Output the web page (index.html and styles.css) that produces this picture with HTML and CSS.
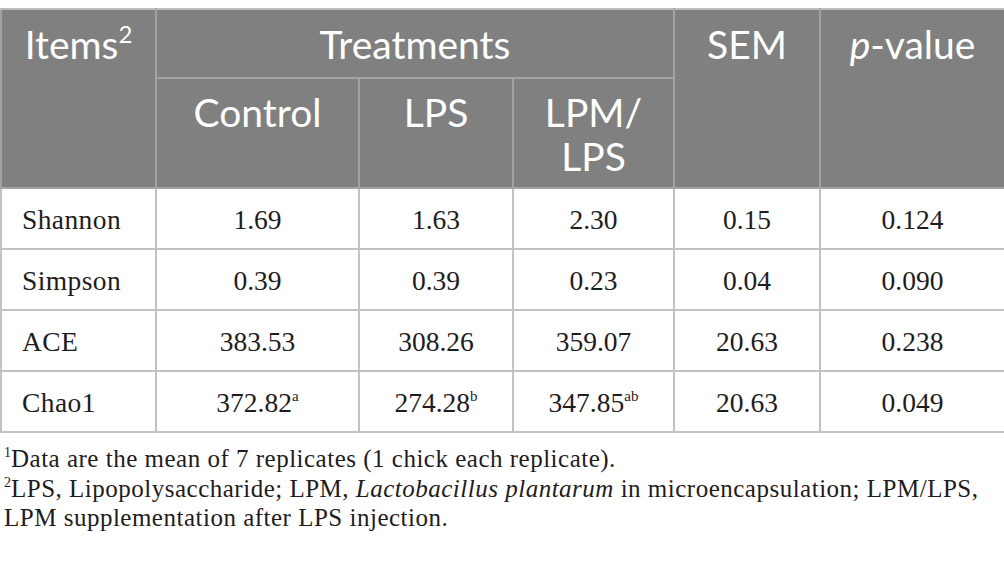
FILE: index.html
```html
<!DOCTYPE html>
<html lang="en">
<head>
  <meta charset="UTF-8">
  <meta name="viewport" content="width=device-width, initial-scale=1.0">
  <title>Alpha diversity</title>
  <link rel="stylesheet" href="styles.css">
</head>
<body>
  <table class="data-table">
    <colgroup>
      <col class="col-items">
      <col class="col-control">
      <col class="col-lps">
      <col class="col-lpm">
      <col class="col-sem">
      <col class="col-p">
    </colgroup>
    <thead>
      <tr class="head-top">
        <th rowspan="2">Items<sup>2</sup></th>
        <th colspan="3">Treatments</th>
        <th rowspan="2">SEM</th>
        <th rowspan="2"><i>p</i>-value</th>
      </tr>
      <tr class="head-sub">
        <th>Control</th>
        <th>LPS</th>
        <th>LPM/<br>LPS</th>
      </tr>
    </thead>
    <tbody>
      <tr>
        <td>Shannon</td>
        <td>1.69</td>
        <td>1.63</td>
        <td>2.30</td>
        <td>0.15</td>
        <td>0.124</td>
      </tr>
      <tr>
        <td>Simpson</td>
        <td>0.39</td>
        <td>0.39</td>
        <td>0.23</td>
        <td>0.04</td>
        <td>0.090</td>
      </tr>
      <tr>
        <td>ACE</td>
        <td>383.53</td>
        <td>308.26</td>
        <td>359.07</td>
        <td>20.63</td>
        <td>0.238</td>
      </tr>
      <tr>
        <td>Chao1</td>
        <td>372.82<sup>a</sup></td>
        <td>274.28<sup>b</sup></td>
        <td>347.85<sup>ab</sup></td>
        <td>20.63</td>
        <td>0.049</td>
      </tr>
    </tbody>
  </table>

  <div class="notes">
    <p><sup>1</sup>Data are the mean of 7 replicates (1 chick each replicate).</p>
    <p><sup>2</sup>LPS, Lipopolysaccharide; LPM, <i>Lactobacillus plantarum</i> in microencapsulation; LPM/LPS,<br>LPM supplementation after LPS injection.</p>
  </div>
</body>
</html>
```

FILE: styles.css
```css
body {
  margin: 0;
  padding-top: 8px;
  background-color: #fff;
  color: #1f1c1d;
  font-family: "Liberation Serif", "Times New Roman", serif;
}

.data-table {
  width: 1004px;
  border-collapse: collapse;
  table-layout: fixed;
}

.col-items { width: 155px; }
.col-control { width: 203px; }
.col-lps { width: 154px; }
.col-lpm { width: 161px; }
.col-sem { width: 146px; }
.col-p { width: 185px; }

.data-table th {
  background-color: #808080;
  color: #fff;
  font-family: Lato, "Open Sans", sans-serif;
  font-weight: normal;
  font-size: 39px;
  line-height: 44px;
  text-align: center;
  vertical-align: top;
  border: 2px solid #a3a3a3;
  padding: 0;
}

.data-table thead tr:first-child th {
  border-top-color: #bdbdbd;
}

.head-top th {
  height: 69px;
  padding-top: 12px;
  box-sizing: border-box;
}

.head-sub th {
  height: 110px;
  padding-top: 11px;
  box-sizing: border-box;
}

.data-table th sup {
  font-size: 24px;
  line-height: 0;
  vertical-align: 16px;
}

.data-table td {
  height: 61px;
  padding: 2px 0 0;
  font-size: 27.5px;
  text-align: center;
  vertical-align: middle;
  border: 2px solid #c2c2c2;
  box-sizing: border-box;
}

.data-table td:first-child {
  text-align: left;
  padding-left: 20px;
  letter-spacing: 0.4px;
}

.data-table td sup {
  font-size: 15px;
  line-height: 0;
  vertical-align: 11px;
}

.notes {
  padding: 11px 0 0 4px;
  font-size: 25px;
  line-height: 29.5px;
  letter-spacing: 0.5px;
}

.notes p {
  margin: 0;
}

.notes sup {
  font-size: 14px;
  line-height: 0;
  vertical-align: 10px;
  letter-spacing: 0;
}
```
